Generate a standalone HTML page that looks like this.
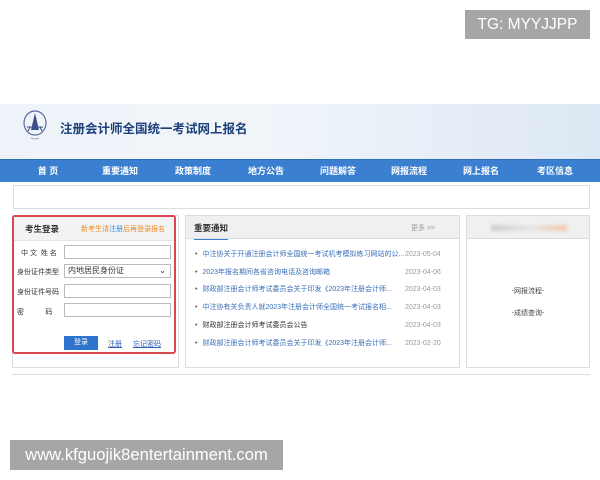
<!DOCTYPE html>
<html><head><meta charset="utf-8"><style>
*{margin:0;padding:0;box-sizing:border-box}
body{width:600px;height:480px;background:#fff;position:relative;overflow:hidden;font-family:"Liberation Sans","Noto Sans CJK SC",sans-serif;color:#333}
.a{position:absolute}
.tg{left:465px;top:10px;width:125px;height:29px;background:#a6a6a6;color:#fff;font-size:15.5px;line-height:29px;text-align:center}
.hd{left:0;top:104px;width:600px;height:55px;background:linear-gradient(90deg,#eef3f9 0%,#f2f6fb 40%,#dde8f4 100%)}
.nav{left:0;top:159px;width:600px;height:23px;background:#3b7fd0;border-top:1px solid #2d6dbd}
.nav span{position:absolute;top:0;line-height:23px;color:#fff;font-size:9px;font-weight:bold;transform:translateX(-50%);white-space:nowrap}
.box{border:1px solid #ddd;background:#fff}
.lbl{font-size:7px;color:#333;position:absolute;left:17px}
.inp{position:absolute;left:64px;width:107px;height:14px;border:1px solid #bbb;background:#fff;font-size:8px;line-height:12px;padding-left:3px}
.nw{position:absolute;left:195px;font-size:7px;line-height:9px;color:#3a6fb8;white-space:nowrap}
.nw:before{content:"•";color:#555;margin-right:5px}
.dt{position:absolute;left:405px;font-size:7px;line-height:9px;color:#999}
</style></head><body>
<div class="a tg">TG: MYYJJPP</div>
<div class="a hd">
<svg class="a" style="left:22px;top:6px" width="26" height="32" viewBox="0 0 26 32"><ellipse cx="13" cy="13" rx="11" ry="12" fill="none" stroke="#5a6aa0" stroke-width="1.2"/><path d="M13 3L9 20h8z" fill="#3c4d8c"/><path d="M5 17h16M8 17l-2 4M18 17l2 4" stroke="#3c4d8c" stroke-width="1" fill="none"/><path d="M9 28q4 2 8 0" stroke="#889" stroke-width="0.8" fill="none"/></svg>
<div class="a" style="left:60px;top:14px;font-size:12.5px;font-weight:bold;color:#1d3f7a">注册会计师全国统一考试网上报名</div>
</div>
<div class="a nav">
<span style="left:48px">首 页</span><span style="left:120px">重要通知</span><span style="left:193px">政策制度</span><span style="left:266px">地方公告</span><span style="left:338px">问题解答</span><span style="left:409px">网报流程</span><span style="left:481px">网上报名</span><span style="left:555px">考区信息</span>
</div>
<div class="a box" style="left:13px;top:185px;width:577px;height:24px"></div>
<div class="a box" style="left:12px;top:215px;width:167px;height:153px"></div>
<div class="a" style="left:12px;top:215px;width:164px;height:139px;border:2px solid #d9474f;border-radius:3px;background:#fff">
<div class="a" style="left:0;top:0;width:160px;height:24px;background:#f3f3f3;border-bottom:1px solid #e3e3e3"></div>
<div class="a" style="left:11px;top:6px;font-size:8.5px;font-weight:bold;color:#333">考生登录</div>
<div class="a" style="left:67px;top:7px;font-size:7px;color:#ef8a1e;white-space:nowrap">新考生请<span style="color:#3a8fe0">注册</span>后再登录报名</div>
</div>
<div class="lbl" style="left:21px;top:248px">中 文&nbsp;&nbsp;姓 名</div>
<div class="inp" style="top:245px"></div>
<div class="lbl" style="top:267px">身份证件类型</div>
<div class="inp" style="top:264px">内地居民身份证<span style="float:right;margin-right:4px">⌄</span></div>
<div class="lbl" style="top:287px">身份证件号码</div>
<div class="inp" style="top:284px"></div>
<div class="lbl" style="top:307px">密&nbsp;&nbsp;&nbsp;&nbsp;&nbsp;&nbsp;&nbsp;&nbsp;&nbsp;&nbsp;&nbsp;码</div>
<div class="inp" style="top:303px"></div>
<div class="a" style="left:64px;top:336px;width:34px;height:14px;background:#2f74cc;color:#fff;font-size:7px;line-height:14px;text-align:center">登录</div>
<div class="a" style="left:108px;top:339px;font-size:7px;color:#2f5fb0;text-decoration:underline">注册</div>
<div class="a" style="left:133px;top:339px;font-size:7px;color:#2f5fb0;text-decoration:underline">忘记密码</div>
<div class="a box" style="left:185px;top:215px;width:275px;height:153px">
<div class="a" style="left:0;top:0;width:273px;height:23px;background:#f0f0f0;border-bottom:1px solid #ddd"></div>
<div class="a" style="left:8px;top:6px;font-size:8.5px;font-weight:bold;color:#333;border-bottom:1px solid #3b7fd0;padding-bottom:5px">重要通知</div>
<div class="a" style="left:225px;top:7px;font-size:7px;color:#999">更多 &gt;&gt;</div>
</div>
<div class="nw" style="top:250px">中注协关于开通注册会计师全国统一考试机考模拟练习网站的公...</div><div class="dt" style="top:250px">2023-05-04</div>
<div class="nw" style="top:268px">2023年报名期间各省咨询电话及咨询邮箱</div><div class="dt" style="top:268px">2023-04-06</div>
<div class="nw" style="top:285px">财政部注册会计师考试委员会关于印发《2023年注册会计师...</div><div class="dt" style="top:285px">2023-04-03</div>
<div class="nw" style="top:303px">中注协有关负责人就2023年注册会计师全国统一考试报名相...</div><div class="dt" style="top:303px">2023-04-03</div>
<div class="nw" style="top:321px;color:#333">财政部注册会计师考试委员会公告</div><div class="dt" style="top:321px">2023-04-03</div>
<div class="nw" style="top:339px">财政部注册会计师考试委员会关于印发《2023年注册会计师...</div><div class="dt" style="top:339px">2023-02-20</div>
<div class="a box" style="left:466px;top:215px;width:124px;height:153px">
<div class="a" style="left:0;top:0;width:122px;height:23px;background:#f0f0f0;border-bottom:1px solid #ddd"></div>
<div class="a" style="left:24px;top:9px;width:76px;height:6px;background:linear-gradient(90deg,#ccc,#e6e6e6 50%,#f4c9b0);filter:blur(1.5px)"></div>
<div class="a" style="left:0;width:122px;top:70px;text-align:center;font-size:7px;color:#444">-网报流程-</div>
<div class="a" style="left:0;width:122px;top:92px;text-align:center;font-size:7px;color:#444">-成绩查询-</div>
</div>
<div class="a" style="left:12px;top:374px;width:578px;height:1px;background:#ddd"></div>
<div class="a" style="left:10px;top:440px;width:273px;height:30px;background:#a6a6a6;color:#fff;font-size:16.6px;line-height:30px;text-align:center;white-space:nowrap">www.kfguojik8entertainment.com</div>
</body></html>
